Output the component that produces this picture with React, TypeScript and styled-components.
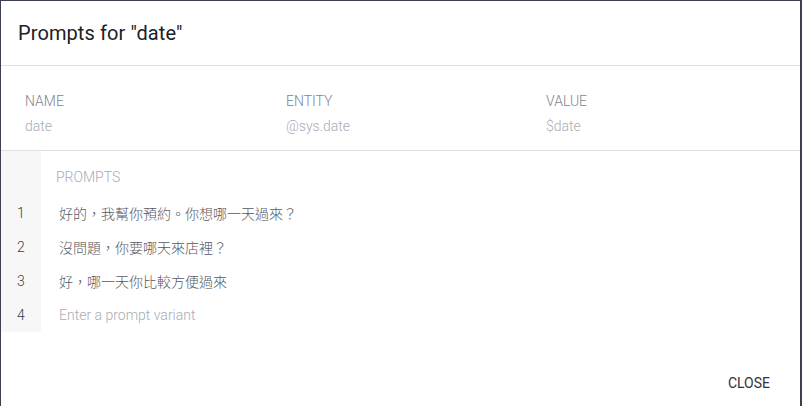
import React, { FC } from 'react';
import styled, { createGlobalStyle } from 'styled-components';

const GlobalStyle = createGlobalStyle`
  html, body {
    margin: 0;
    padding: 0;
    background: #3d4050;
    font-family: Roboto, "Noto Sans CJK TC", "Noto Sans", sans-serif;
    -webkit-font-smoothing: antialiased;
  }
`;

const Overlay = styled.div`
  width: 802px;
  height: 406px;
  padding: 1px 0 0 1px;
  box-sizing: border-box;
  overflow: hidden;
`;

const Dialog = styled.div`
  width: 799px;
  height: 420px;
  background: #ffffff;
  display: flex;
  flex-direction: column;
`;

const Header = styled.div`
  height: 64px;
  display: flex;
  align-items: center;
  padding: 0 17px;
  border-bottom: 1px solid #e0e0e0;
`;

const Title = styled.h2`
  margin: 0;
  font-size: 20px;
  font-weight: 400;
  color: #202124;
  letter-spacing: 0.1px;
`;

const Meta = styled.div`
  display: grid;
  grid-template-columns: 261px 260px 1fr;
  padding: 27px 24px 0;
  height: 85px;
  box-sizing: border-box;
  border-bottom: 1px solid #e0e0e0;
`;

const MetaCell = styled.div`
  display: flex;
  flex-direction: column;
  gap: 8px;
`;

const MetaLabel = styled.div`
  font-size: 14px;
  line-height: 16px;
  font-weight: 300;
  color: #80848f;
  text-transform: uppercase;
`;

const MetaValue = styled.div`
  font-size: 14px;
  line-height: 18px;
  font-weight: 300;
  color: #a9acb4;
`;

const Prompts = styled.div`
  display: flex;
  flex-direction: column;
  width: 100%;
`;

const Row = styled.div<{ $h: number }>`
  display: flex;
  height: ${({ $h }) => $h}px;
`;

const Gutter = styled.div`
  width: 40px;
  flex: none;
  background: #f7f7f7;
  display: flex;
  align-items: center;
  padding-left: 16px;
  box-sizing: border-box;
  font-size: 14px;
  font-weight: 300;
  color: #3c3f48;
`;

const SectionLabel = styled.div`
  padding: 6px 0 0 15px;
  display: flex;
  align-items: center;
  font-size: 14px;
  font-weight: 300;
  color: #a9acb4;
  text-transform: uppercase;
`;

const PromptText = styled.div<{ $placeholder?: boolean }>`
  padding-left: 18px;
  display: flex;
  align-items: center;
  font-size: 14px;
  font-weight: 300;
  color: ${({ $placeholder }) => ($placeholder ? '#a9acb4' : '#555862')};
  &:lang(zh-Hant) {
    font-family: Roboto, "Noto Sans CJK TC", sans-serif;
  }
`;

const Footer = styled.div`
  display: flex;
  justify-content: flex-end;
  padding: 35px 22px 0 0;
`;

const CloseButton = styled.button`
  border: none;
  background: none;
  font-family: inherit;
  font-size: 14px;
  font-weight: 400;
  color: #333;
  text-transform: uppercase;
  padding: 8px 8px;
  cursor: pointer;
`;

const meta = [
  { label: 'Name', value: 'date' },
  { label: 'Entity', value: '@sys.date' },
  { label: 'Value', value: '$date' },
];

const prompts = [
  '好的，我幫你預約。你想哪一天過來？',
  '沒問題，你要哪天來店裡？',
  '好，哪一天你比較方便過來',
];

const App: FC = () => (
  <>
    <GlobalStyle />
    <Overlay>
      <Dialog>
        <Header>
          <Title>Prompts for "date"</Title>
        </Header>
        <Meta>
          {meta.map((m) => (
            <MetaCell key={m.label}>
              <MetaLabel>{m.label}</MetaLabel>
              <MetaValue>{m.value}</MetaValue>
            </MetaCell>
          ))}
        </Meta>
        <Prompts>
          <Row $h={45}>
            <Gutter />
            <SectionLabel>Prompts</SectionLabel>
          </Row>
          {prompts.map((p, i) => (
            <Row $h={34} key={i}>
              <Gutter>{i + 1}</Gutter>
              <PromptText lang="zh-Hant">{p}</PromptText>
            </Row>
          ))}
          <Row $h={34}>
            <Gutter>4</Gutter>
            <PromptText $placeholder>Enter a prompt variant</PromptText>
          </Row>
        </Prompts>
        <Footer>
          <CloseButton>Close</CloseButton>
        </Footer>
      </Dialog>
    </Overlay>
  </>
);

export default App;
